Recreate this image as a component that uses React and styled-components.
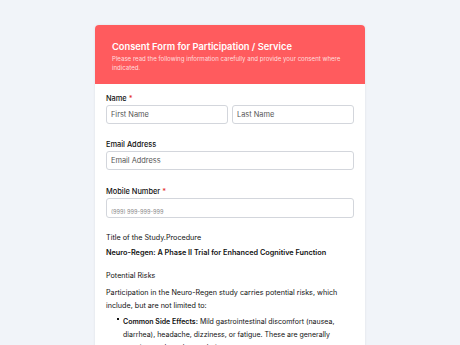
import React from "react";
import styled, { createGlobalStyle } from "styled-components";

const Global = createGlobalStyle`
  html, body { margin: 0; padding: 0; background: #f1f4f9; }
  body { font-family: Inter, "Noto Sans", sans-serif; color: #111; overflow: hidden; }
  * { box-sizing: border-box; }
`;

const Page = styled.div`
  display: flex;
  justify-content: center;
  padding-top: 25px;
  height: 345px;
`;

const Card = styled.div`
  width: 270px;
  background: #fff;
  border-radius: 4px;
  box-shadow: 0 0 3px rgba(0,0,0,0.08);
  overflow: hidden;
  align-self: flex-start;
`;

const Header = styled.div`
  background: #ff5b5e;
  padding: 16px 17px 12px 17px;
  color: #fff;
`;

const Title = styled.h1`
  margin: 0 0 1px 0;
  font-size: 9.3px;
  font-weight: 600;
  line-height: 12px;
`;

const Subtitle = styled.p`
  margin: 0;
  font-size: 6.1px;
  line-height: 9px;
  color: rgba(255,255,255,0.8);
`;

const Body = styled.div`
  padding: 10px 11px 0 11px;
  display: flex;
  flex-direction: column;
`;

const Field = styled.div`
  display: flex;
  flex-direction: column;
  margin-bottom: ${p => p.$mb || 16}px;
`;

const Label = styled.label`
  font-size: 7.4px;
  font-weight: 500;
  line-height: 10px;
  margin-bottom: 1px;
`;

const Star = styled.span`
  color: #e53935;
`;

const Row = styled.div`
  display: flex;
  gap: 4px;
  & > input { flex: 1; min-width: 0; }
`;

const Input = styled.input`
  display: block;
  width: 100%;
  height: ${p => (p.$tall ? 20 : 19)}px;
  border: 1px solid #d3d6dc;
  border-radius: 3px;
  padding: ${p => (p.$tall ? "8px 4px 0 4px" : "0 4px")};
  font-family: inherit;
  font-size: ${p => (p.$small ? "5.6px" : "7.4px")};
  color: #333;
  background: #fff;
  outline: none;
  &::placeholder { color: ${p => (p.$small ? "#888" : "#555")}; }
`;

const Text = styled.p`
  margin: 0 0 ${p => p.$mb ?? 8}px 0;
  font-size: ${p => (p.$bold ? "7.3px" : "7.2px")};
  line-height: 13px;
  font-weight: ${p => (p.$bold ? 600 : 400)};
`;

const List = styled.ul`
  margin: 0;
  padding-left: 17px;
  list-style: none;
`;

const Item = styled.li`
  position: relative;
  font-size: 7px;
  line-height: 13px;
  & b { font-weight: 600; }
  &::before {
    content: "";
    position: absolute;
    left: -6px;
    top: 3px;
    width: 2px;
    height: 2px;
    background: #111;
  }
`;

export default function App() {
  return (
    <>
      <Global />
      <Page>
        <Card>
          <Header>
            <Title>Consent Form for Participation / Service</Title>
            <Subtitle>
              Please read the following information carefully and provide your consent where indicated.
            </Subtitle>
          </Header>
          <Body>
            <Field $mb={16}>
              <Label>Name <Star>*</Star></Label>
              <Row>
                <Input placeholder="First Name" />
                <Input placeholder="Last Name" />
              </Row>
            </Field>
            <Field $mb={17}>
              <Label>Email Address</Label>
              <Input placeholder="Email Address" />
            </Field>
            <Field $mb={13}>
              <Label>Mobile Number <Star>*</Star></Label>
              <Input $small $tall placeholder="(999) 999-999-999" />
            </Field>
            <Text $mb={2}>Title of the Study.Procedure</Text>
            <Text $bold $mb={10}>Neuro-Regen: A Phase II Trial for Enhanced Cognitive Function</Text>
            <Text $mb={4}>Potential Risks</Text>
            <Text $mb={3}>
              Participation in the Neuro-Regen study carries potential risks, which include, but are not limited to:
            </Text>
            <List>
              <Item>
                <b>Common Side Effects:</b> Mild gastrointestinal discomfort (nausea, diarrhea), headache, dizziness, or fatigue. These are generally transient and resolve on their own.
              </Item>
            </List>
          </Body>
        </Card>
      </Page>
    </>
  );
}
